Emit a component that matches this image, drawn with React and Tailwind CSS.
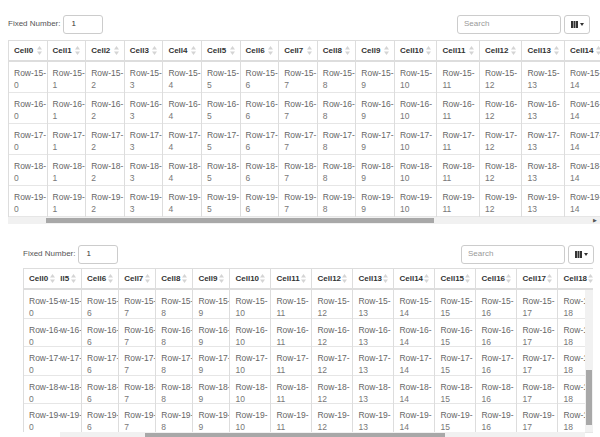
import React from "react";

const font = { fontFamily: '"Liberation Sans", Arial, sans-serif' };

function Sort() {
  return (
    <svg width="5" height="9" viewBox="0 0 5 9" className="shrink-0">
      <path d="M2.5 0 L5 3.5 L0 3.5 Z" fill="#d4d4d4" />
      <path d="M2.5 9 L5 5.5 L0 5.5 Z" fill="#d4d4d4" />
    </svg>
  );
}

function Col({ i, w, rows, rowH, headH }) {
  return (
    <div className="shrink-0 border-l border-[#ddd]" style={{ width: w }}>
      <div className="flex items-center justify-between px-[5px] border-b-2 border-[#ddd] bg-white" style={{ height: headH }}>
        <span className="font-bold text-[8px] text-[#333] whitespace-nowrap">Cell{i}</span>
        <Sort />
      </div>
      {rows.map((r) => (
        <div key={r} className="border-b border-[#e6e6e6] px-[5px] pt-[5px] text-[8.5px] leading-[12px] text-[#666] whitespace-nowrap overflow-hidden" style={{ height: rowH }}>
          <div>Row-{r}-</div>
          <div className="text-[#777]">{i}</div>
        </div>
      ))}
    </div>
  );
}

const widths = (i) => (i < 10 ? 38.6 : 42.5);

function Toolbar() {
  return (
    <div className="flex items-center justify-between h-[20px]">
      <div className="flex items-center gap-[3px] text-[8px] text-[#555]">
        <span>Fixed Number:</span>
        <div className="w-[40px] h-[19px] border border-[#ccc] rounded-[3px] text-[8px] pl-[7px] flex items-center text-[#333]">1</div>
      </div>
      <div className="flex items-center gap-[3px]">
        <div className="w-[104px] h-[19px] border border-[#ccc] rounded-[3px] text-[8px] pl-[6px] flex items-center text-[#999]">Search</div>
        <div className="w-[26px] h-[19px] border border-[#ccc] rounded-[3px] flex items-center justify-center gap-[2px]">
          <svg width="7" height="7" viewBox="0 0 7 7"><rect x="0" y="0" width="2" height="7" fill="#333"/><rect x="2.5" y="0" width="2" height="7" fill="#333"/><rect x="5" y="0" width="2" height="7" fill="#333"/></svg>
          <svg width="4" height="3" viewBox="0 0 4 3"><path d="M0 0 L4 0 L2 3Z" fill="#333"/></svg>
        </div>
      </div>
    </div>
  );
}

export default function App() {
  const rows = [15, 16, 17, 18, 19];
  const top = Array.from({ length: 16 }, (_, i) => i);
  const bottom = Array.from({ length: 14 }, (_, i) => i + 5);
  return (
    <div className="w-[600px] h-[437px] overflow-hidden bg-white" style={font}>
      <div className="pl-[8px] pt-[14px] w-[608px] pr-[18px]">
        <Toolbar />
      </div>
      <div className="ml-[8px] mt-[6px] h-[184px] overflow-hidden border-t border-[#ddd] relative">
        <div className="flex">
          {top.map((i) => (
            <Col key={i} i={i} w={widths(i)} rows={rows} rowH={31} headH={21} />
          ))}
        </div>
        <div className="absolute left-0 right-0 bottom-0 h-[7px] bg-[#f1f1f1]">
          <div className="absolute left-[38px] w-[388px] top-[1px] h-[5px] bg-[#a8a8a8]" />
          <div className="absolute right-[3px] top-[1px] text-[5px] leading-[5px] text-[#555]">▶</div>
        </div>
      </div>
      <div className="pl-[23px] pr-[6px] mt-[20px]">
        <Toolbar />
      </div>
      <div className="ml-[23px] mr-[7px] mt-[4px] h-[171px] overflow-hidden border-t border-[#ddd] relative">
        <div className="flex">
          <Col i={0} w={37} rows={rows} rowH={28.6} headH={21} />
          <div className="flex-1 overflow-hidden">
            <div className="flex ml-[-16px]">
              {bottom.map((i) => (
                <Col key={i} i={i} w={widths(i) - 1.5} rows={rows} rowH={28.6} headH={21} />
              ))}
            </div>
          </div>
        </div>
        <div className="absolute right-0 top-[21px] bottom-[7px] w-[8px] bg-[#f1f1f1]">
          <div className="absolute left-[1px] top-[80px] w-[6px] h-[55px] bg-[#a8a8a8]" />
        </div>
        <div className="absolute left-0 right-[8px] bottom-0 h-[7px] bg-[#f1f1f1]">
          <div className="absolute left-0 w-[37px] h-full bg-white" />
          <div className="absolute left-[122px] w-[300px] top-[1px] h-[5px] bg-[#a8a8a8]" />
        </div>
      </div>
    </div>
  );
}
